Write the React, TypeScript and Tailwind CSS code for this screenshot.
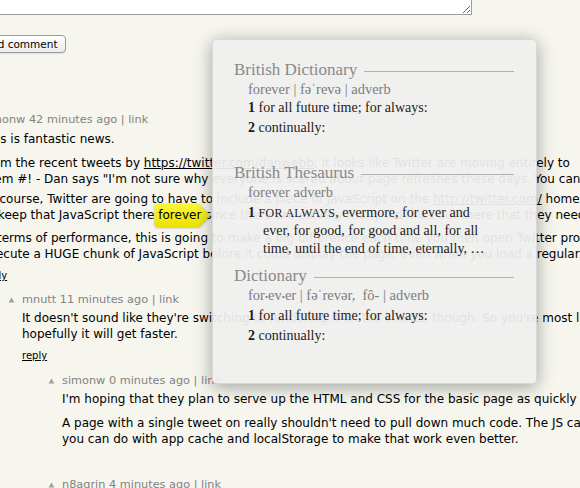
import React from "react";

function Arrow() {
  return (
    <svg width="7" height="6" viewBox="0 0 7 6" className="block">
      <path d="M3.5 0.5 L6.5 5.5 L0.5 5.5 Z" fill="#a0a0a0" />
    </svg>
  );
}

function Comment({
  indent,
  head,
  children,
  className = "",
}: {
  indent: string;
  head: string;
  children?: React.ReactNode;
  className?: string;
}) {
  return (
    <div className={`flex ${indent} ${className}`}>
      <div className="w-[14px] shrink-0 pt-[5px]">
        <Arrow />
      </div>
      <div>
        <div className="whitespace-nowrap text-[11.3px] leading-4 text-[#828282]">{head}</div>
        {children}
      </div>
    </div>
  );
}

function Highlight({ children }: { children: React.ReactNode }) {
  return (
    <span className="relative inline-block">
      <svg
        width="58"
        height="25"
        viewBox="0 0 58 25"
        className="absolute left-[-4px] top-[-4px] drop-shadow-[0_1px_1px_rgba(0,0,0,0.25)]"
      >
        <defs>
          <linearGradient id="hl" x1="0" y1="0" x2="0" y2="1">
            <stop offset="0" stopColor="#fbf73a" />
            <stop offset="1" stopColor="#ebe200" />
          </linearGradient>
        </defs>
        <path
          d="M4 0.5 H45 L56.5 12.5 L45 24 H4 Q0.5 24 0.5 20.5 V4 Q0.5 0.5 4 0.5 Z"
          fill="url(#hl)"
        />
      </svg>
      <span className="relative">{children}</span>
    </span>
  );
}

function Heading({ children, className = "" }: { children: React.ReactNode; className?: string }) {
  return (
    <div className={`flex items-center ${className}`}>
      <span className="text-[17px] leading-5 text-[#898989]">{children}</span>
      <span className="ml-[7px] mt-[3px] h-px flex-1 bg-[#b0b0b0]" />
    </div>
  );
}

function Sub({ children }: { children: React.ReactNode }) {
  return <div className="pl-[14px] text-[14.5px] leading-[18px] text-[#7d7d7d]">{children}</div>;
}

function Sense({ n, children }: { n: string; children: React.ReactNode }) {
  return (
    <div className="pl-[14px] text-[14px] leading-5 text-[#1c1c1c]">
      <b>{n}</b> {children}
    </div>
  );
}

const body = "whitespace-nowrap text-[12px] leading-4 text-black";

export default function App() {
  return (
    <div className="relative h-[488px] w-[580px] overflow-hidden bg-[#f6f6ef] font-['DejaVu_Sans',sans-serif]">
      <div className="ml-[-32px] w-[1000px]">
        <textarea
          readOnly
          className="mt-[-66px] ml-[8px] block h-[81px] w-[496px] border border-[#9c9c9c] bg-white"
        />
        <div className="ml-[8px] mt-[20px] inline-block h-[18px] rounded-[4px] border border-[#9a9a9a] bg-gradient-to-b from-white to-[#ececec] px-[7px] text-[10.5px] leading-4 text-black shadow-[0_1px_0_rgba(0,0,0,0.08)]">
          Add comment
        </div>

        <Comment indent="pl-0" head="simonw 42 minutes ago | link" className="mt-[57px]">
          <p className={`${body} mt-[3px]`}>This is fantastic news.</p>
          <p className={`${body} mt-[8px]`}>
            From the recent tweets by <span className="underline">https://twitter.com/danwebb</span>, it looks like
            Twitter are moving entirely to
            <br />
            them #! - Dan says "I'm not sure why everyone is scared about page refreshes these days. You can
          </p>
          <p className={`${body} mt-[4px]`}>
            Of course, Twitter are going to have to include a piece of JavaScript on the{" "}
            <span className="underline">http://twitter.com/</span> home
            <br />
            to keep that JavaScript there <Highlight>forever</Highlight> since there are so very many old links out
            there that they need
          </p>
          <p className={`${body} mt-[7px]`}>
            In terms of performance, this is going to make a big difference each time you then open Twitter pro
            <br />
            execute a HUGE chunk of JavaScript before it could display the page, even when you load a regular H
          </p>
          <div className="mt-[6px] text-[10px] leading-4 text-black underline">reply</div>
        </Comment>

        <Comment indent="pl-[40px]" head="mnutt 11 minutes ago | link" className="mt-[8px]">
          <p className={`${body} mt-[2px]`}>
            It doesn't sound like they're switching to rendering it on the clients, though. So you're most likely
            <br />
            hopefully it will get faster.
          </p>
          <div className="mt-[6px] text-[10px] leading-4 text-black underline">reply</div>
        </Comment>

        <Comment indent="pl-[80px]" head="simonw 0 minutes ago | link" className="mt-[9px]">
          <p className={`${body} mt-[2px]`}>
            I'm hoping that they plan to serve up the HTML and CSS for the basic page as quickly as possible.
          </p>
          <p className={`${body} mt-[8px]`}>
            A page with a single tweet on really shouldn't need to pull down much code. The JS can
            <br />
            you can do with app cache and localStorage to make that work even better.
          </p>
        </Comment>

        <Comment indent="pl-[80px]" head="n8agrin 4 minutes ago | link" className="mt-[30px]" />
      </div>

      <div className="absolute left-[212px] top-[39px] h-[345px] w-[325px] rounded-[5px] border border-black/10 bg-[rgba(239,239,239,0.94)] pl-[21px] pr-[22px] pt-[20px] font-['Liberation_Serif','DejaVu_Serif',serif] shadow-[0_3px_18px_rgba(0,0,0,0.35)]">
        <Heading>British Dictionary</Heading>
        <Sub>forever | fəˈrevə | adverb</Sub>
        <Sense n="1">for all future time; for always:</Sense>
        <Sense n="2">continually:</Sense>

        <Heading className="mt-[25px]">British Thesaurus</Heading>
        <Sub>forever adverb</Sub>
        <div className="mt-[3px] whitespace-nowrap pl-[29px] -indent-[15px] text-[14px] leading-[18px] text-[#1c1c1c]">
          <b>1</b> <span className="text-[12px] tracking-[0.3px]">FOR ALWAYS</span>, evermore, for ever and
          <br />
          ever, for good, for good and all, for all
          <br />
          time, until the end of time, eternally, …
        </div>

        <Heading className="mt-[8px]">Dictionary</Heading>
        <Sub>
          for<span className="text-[9px]">•</span>ev<span className="text-[9px]">•</span>er | fəˈrevər,&nbsp;&nbsp;fô- |
          adverb
        </Sub>
        <Sense n="1">for all future time; for always:</Sense>
        <Sense n="2">continually:</Sense>
      </div>
    </div>
  );
}
